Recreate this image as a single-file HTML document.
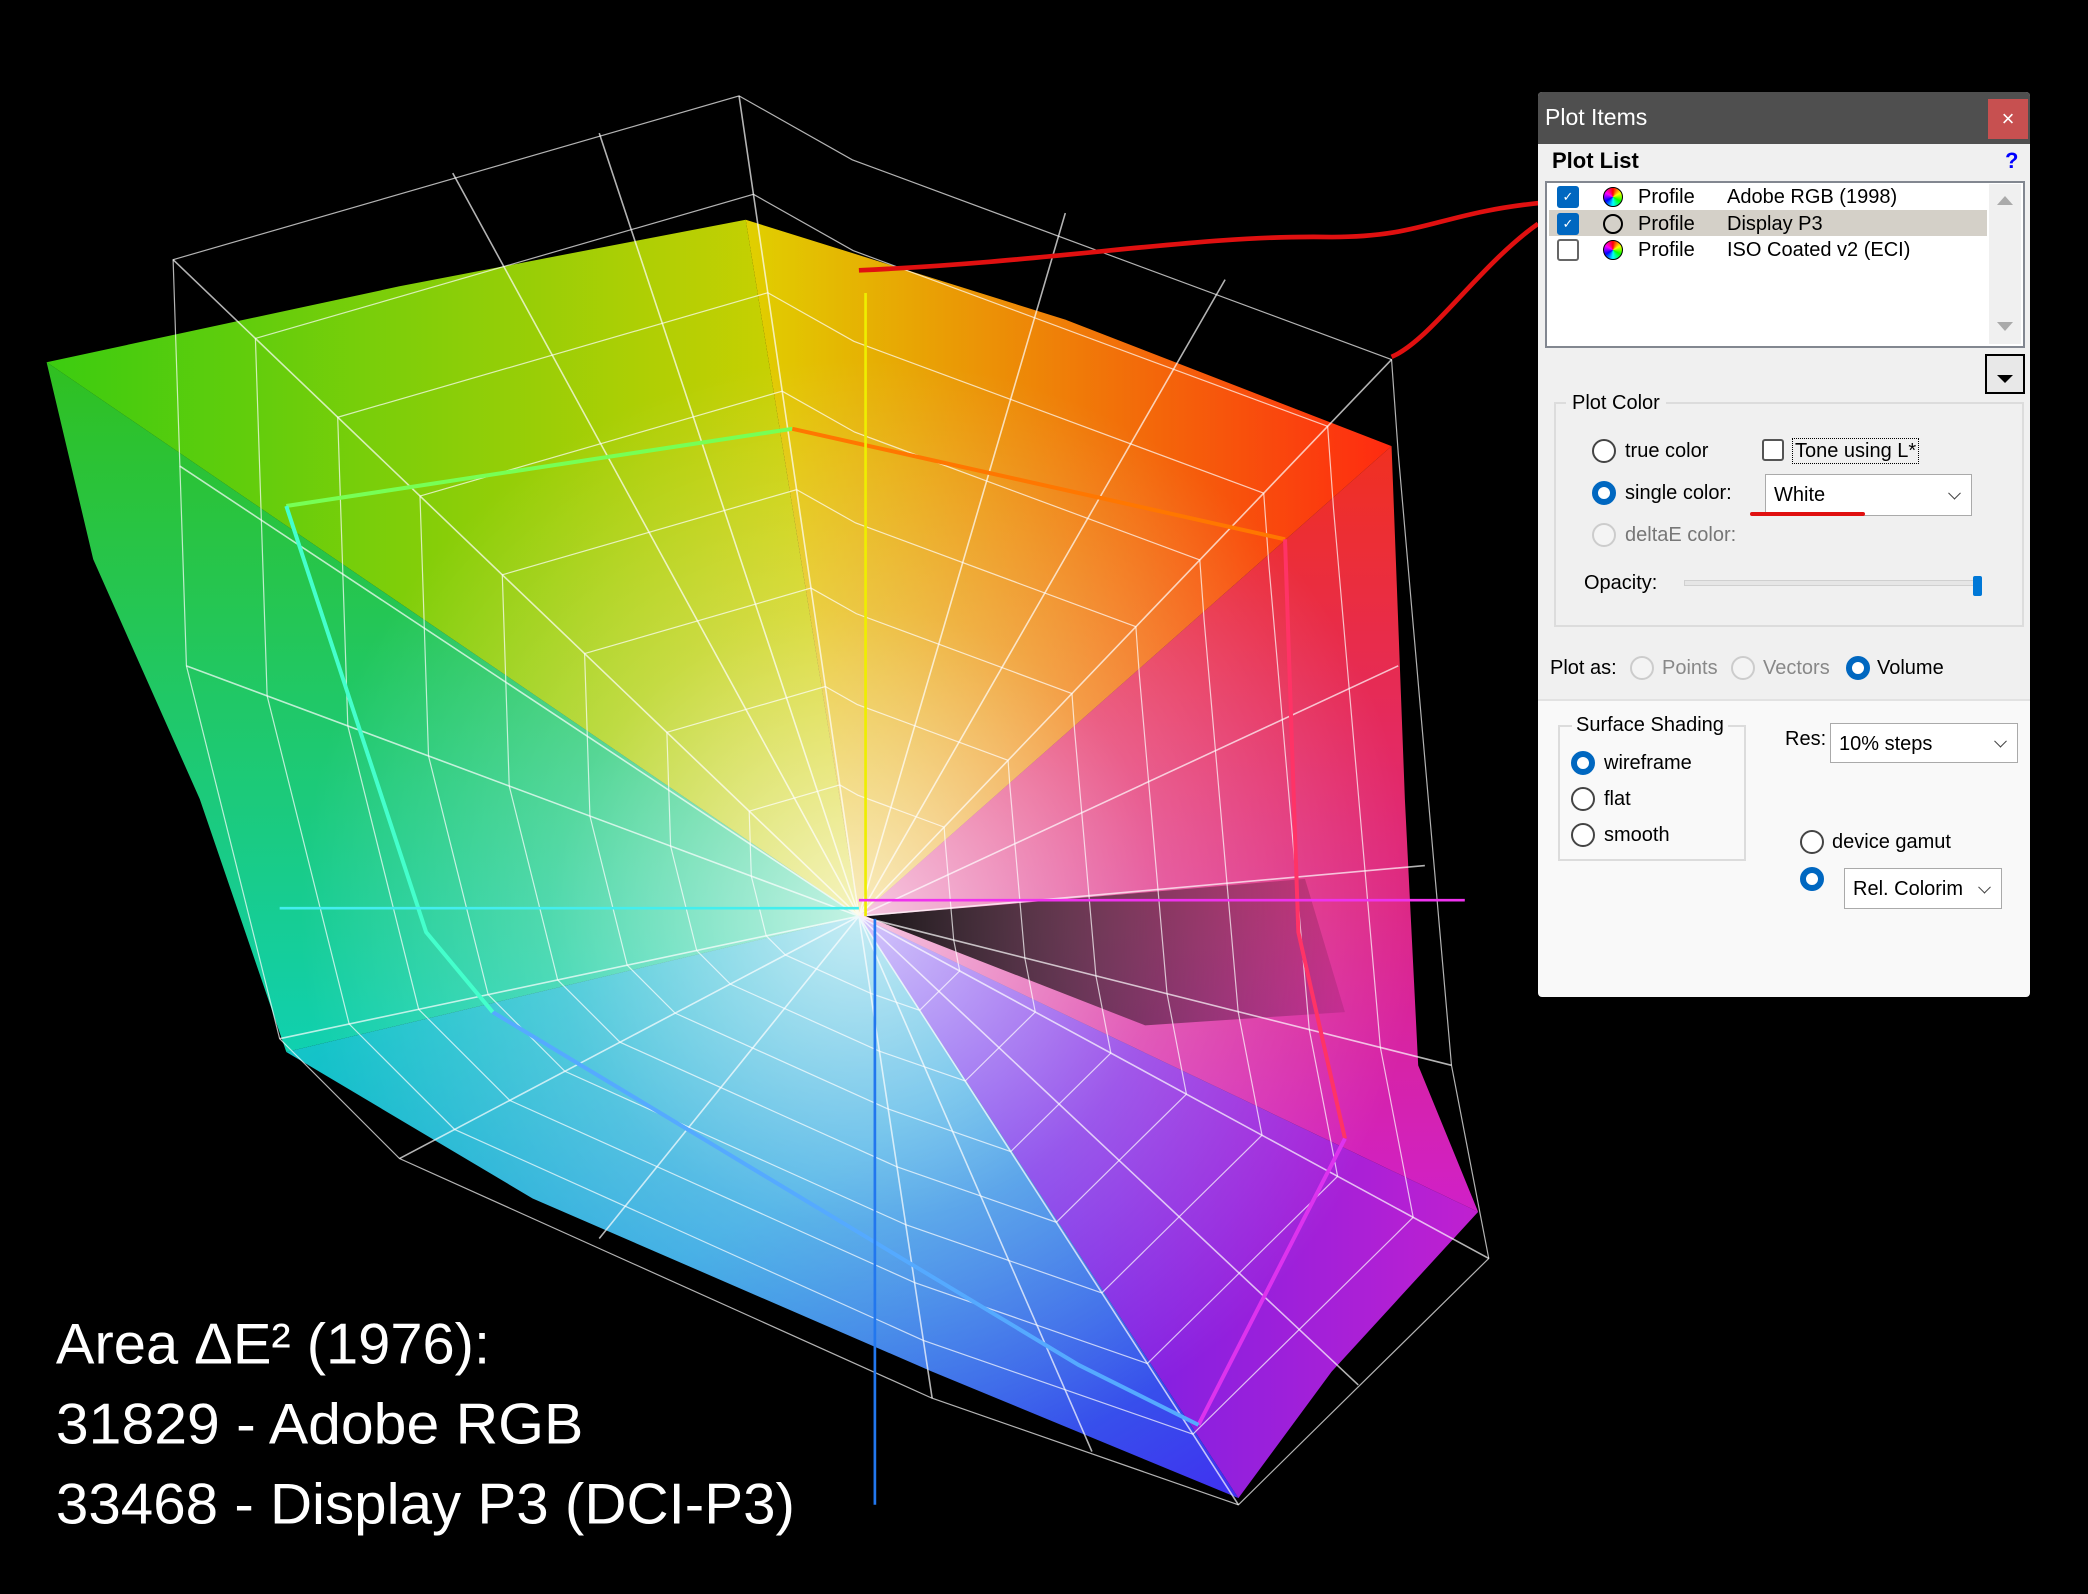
<!DOCTYPE html>
<html><head><meta charset="utf-8">
<style>
*{margin:0;padding:0;box-sizing:border-box}
body{width:2088px;height:1594px;background:#000;position:relative;overflow:hidden;font-family:"Liberation Sans",sans-serif}
.a{position:absolute;white-space:nowrap}
.t{font-size:20px;color:#000;line-height:24px}
.r{position:absolute;width:24px;height:24px;border-radius:50%;border:2px solid #444;background:#fff}
.r.on{border:6px solid #0067c0;background:#fff}
.r.dis{border-color:#ccc;background:#f4f4f4}
.cb{position:absolute;width:22px;height:22px;border:2px solid #333;border-radius:3px;background:#fff}
.cb.on{background:#0067c0;border-color:#0067c0;color:#fff;font-size:13px;text-align:center;line-height:18px}
.combo{position:absolute;background:#fff;border:1px solid #aaa;font-size:20px;padding-left:8px}
.combo:after{content:"";position:absolute;right:12px;top:50%;width:8px;height:8px;border-right:1.5px solid #444;border-bottom:1.5px solid #444;transform:translateY(-70%) rotate(45deg)}
.grp{position:absolute;border:2px solid #dcdcdc}
.wheel{position:absolute;width:20px;height:20px;border-radius:50%;background:conic-gradient(#f00,#ff0,#0f0,#0ff,#00f,#f0f,#f00);border:1px solid #000}
</style></head><body>
<svg class="a" style="left:0;top:0" width="2088" height="1594" viewBox="0 0 1568 1197" preserveAspectRatio="none">
<defs>
<linearGradient id="gA" x1="0" x2="1"><stop offset="0" stop-color="#3bcc10"/><stop offset="1" stop-color="#d8d000"/></linearGradient>
<linearGradient id="gB" x1="0" x2="1"><stop offset="0" stop-color="#e0d000"/><stop offset="1" stop-color="#ff2a10"/></linearGradient>
<linearGradient id="gC" x1="0" x2="0" y1="0" y2="1"><stop offset="0" stop-color="#f03020"/><stop offset="1" stop-color="#d020c8"/></linearGradient>
<linearGradient id="gD" x1="1" x2="0"><stop offset="0" stop-color="#c020d0"/><stop offset="1" stop-color="#5020f0"/></linearGradient>
<linearGradient id="gE" x1="1" x2="0" y1="1" y2="0"><stop offset="0" stop-color="#4030f0"/><stop offset="0.5" stop-color="#20a0e0"/><stop offset="1" stop-color="#10d0c0"/></linearGradient>
<linearGradient id="gF" x1="0" x2="0" y1="1" y2="0"><stop offset="0" stop-color="#10d0b0"/><stop offset="1" stop-color="#30c020"/></linearGradient>
<radialGradient id="rw" cx="645" cy="688" r="420" gradientUnits="userSpaceOnUse"><stop offset="0" stop-color="#fff" stop-opacity="0.75"/><stop offset="0.55" stop-color="#fff" stop-opacity="0.25"/><stop offset="1" stop-color="#fff" stop-opacity="0"/></radialGradient>
<linearGradient id="dk" x1="0" x2="1"><stop offset="0" stop-color="#000" stop-opacity="0.9"/><stop offset="1" stop-color="#000" stop-opacity="0.1"/></linearGradient>
</defs>
<polygon fill="url(#gA)" points="645,688 35,272 300,215 560,165"/>
<polygon fill="url(#gB)" points="645,688 560,165 800,240 1045,335"/>
<polygon fill="url(#gC)" points="645,688 1045,335 1055,600 1065,800 1110,910"/>
<polygon fill="url(#gD)" points="645,688 1110,910 1000,1030 930,1125"/>
<polygon fill="url(#gE)" points="645,688 930,1125 700,1030 400,900 215,790"/>
<polygon fill="url(#gF)" points="645,688 215,790 150,600 70,420 35,272"/>
<polygon fill="url(#rw)" points="35,272 300,215 560,165 800,240 1045,335 1055,600 1065,800 1110,910 1000,1030 930,1125 700,1030 400,900 215,790 150,600 70,420"/>
<polygon fill="url(#dk)" points="650,688 980,660 1010,760 860,770"/>
<g fill="none" stroke="#fff" stroke-opacity="0.7" stroke-width="1.2">
<g id="wf"><polygon vector-effect="non-scaling-stroke" points="130,195 555,72 640,120 1045,270 1050,340 1090,800 1118,945 930,1130 700,1050 300,870 210,780 140,500"/></g>
<use href="#wf" transform="translate(645,688) scale(0.88) translate(-645,-688)"/>
<use href="#wf" transform="translate(645,688) scale(0.76) translate(-645,-688)"/>
<use href="#wf" transform="translate(645,688) scale(0.64) translate(-645,-688)"/>
<use href="#wf" transform="translate(645,688) scale(0.52) translate(-645,-688)"/>
<use href="#wf" transform="translate(645,688) scale(0.40) translate(-645,-688)"/>
<use href="#wf" transform="translate(645,688) scale(0.28) translate(-645,-688)"/>
<use href="#wf" transform="translate(645,688) scale(0.16) translate(-645,-688)"/>
<path d="M645,688L130,195M645,688L555,72M645,688L340,130M645,688L450,100M645,688L800,160M645,688L920,210M645,688L1045,270M645,688L1050,500M645,688L1070,650M645,688L1090,800M645,688L1118,945M645,688L1020,1040M645,688L930,1130M645,688L820,1090M645,688L700,1050M645,688L450,930M645,688L210,780M645,688L140,500M645,688L135,350M645,688L300,870"/>
</g>
<polyline fill="none" stroke-width="3" stroke="#7f5" points="215,380 595,322"/>
<polyline fill="none" stroke-width="3" stroke="#f70" points="595,322 965,405"/>
<polyline fill="none" stroke-width="3" stroke="#f36" points="965,405 975,700 1010,855"/>
<polyline fill="none" stroke-width="3" stroke="#d3e" points="1010,855 900,1070"/>
<polyline fill="none" stroke-width="3" stroke="#5af" points="900,1070 810,1025 370,760"/>
<polyline fill="none" stroke-width="3" stroke="#4fc" points="370,760 320,700 215,380"/>
<line x1="650" y1="220" x2="650" y2="688" stroke="#ee0" stroke-width="2"/>
<line x1="645" y1="676" x2="1100" y2="676" stroke="#e3e" stroke-width="2"/>
<line x1="210" y1="682" x2="645" y2="682" stroke="#4ee" stroke-width="2"/>
<line x1="657" y1="690" x2="657" y2="1130" stroke="#27e" stroke-width="2"/>
<path d="M1160,152 C1080,160 1070,178 1000,178 C900,176 800,196 645,203" fill="none" stroke="#e01010" stroke-width="3.5"/>
<path d="M1155,168 C1110,200 1075,255 1045,268" fill="none" stroke="#e01010" stroke-width="3.5"/>
<text x="42" y="1024" fill="#fff" font-family="Liberation Sans, sans-serif" font-size="43" textLength="326" lengthAdjust="spacingAndGlyphs">Area ΔE² (1976):</text>
<text x="42" y="1084" fill="#fff" font-family="Liberation Sans, sans-serif" font-size="43" textLength="396" lengthAdjust="spacingAndGlyphs">31829 - Adobe RGB</text>
<text x="42" y="1144" fill="#fff" font-family="Liberation Sans, sans-serif" font-size="43" textLength="555" lengthAdjust="spacingAndGlyphs">33468 - Display P3 (DCI-P3)</text>
</svg>

<div class="a" style="left:1538px;top:92px;width:492px;height:905px;background:#f9f9f9;border-radius:4px;overflow:hidden">
 <div class="a" style="left:0;top:0;width:492px;height:52px;background:#4f4f4f"></div>
 <div class="a" style="left:0;top:52px;width:492px;height:556px;background:#f0f0f0"></div>
 <div class="a" style="left:0;top:607px;width:492px;height:2px;background:#e2e2e2"></div>
</div>
<div class="a" style="left:1545px;top:104px;font-size:23px;color:#fff">Plot Items</div>
<div class="a" style="left:1988px;top:99px;width:40px;height:40px;background:#c75050;color:#fff;font-size:22px;text-align:center;line-height:40px">×</div>
<div class="a" style="left:1552px;top:148px;font-size:22px;font-weight:bold">Plot List</div>
<div class="a" style="left:2005px;top:148px;font-size:22px;font-weight:bold;color:#00f">?</div>
<div class="a" style="left:1545px;top:181px;width:480px;height:167px;background:#fff;border:2px solid #828790"></div>
<div class="a" style="left:1989px;top:184px;width:32px;height:160px;background:#f0f0f0"></div>
<div class="a" style="left:1997px;top:196px;width:0;height:0;border-left:8px solid transparent;border-right:8px solid transparent;border-bottom:9px solid #aaa"></div>
<div class="a" style="left:1997px;top:322px;width:0;height:0;border-left:8px solid transparent;border-right:8px solid transparent;border-top:9px solid #aaa"></div>
<div class="a" style="left:1549px;top:210px;width:438px;height:26px;background:#d4d0c8"></div>
<div class="cb on" style="left:1557px;top:186px">✓</div>
<div class="cb on" style="left:1557px;top:213px">✓</div>
<div class="cb" style="left:1557px;top:239px;border-color:#666"></div>
<div class="wheel" style="left:1603px;top:187px"></div>
<div class="a" style="left:1603px;top:214px;width:20px;height:20px;border-radius:50%;border:2px solid #000"></div>
<div class="wheel" style="left:1603px;top:240px"></div>
<div class="a t" style="left:1638px;top:185px">Profile</div><div class="a t" style="left:1727px;top:185px">Adobe RGB (1998)</div>
<div class="a t" style="left:1638px;top:212px">Profile</div><div class="a t" style="left:1727px;top:212px">Display P3</div>
<div class="a t" style="left:1638px;top:238px">Profile</div><div class="a t" style="left:1727px;top:238px">ISO Coated v2 (ECI)</div>
<div class="a" style="left:1985px;top:354px;width:40px;height:40px;border:2px solid #000;background:#e8e8e8"></div>
<div class="a" style="left:1997px;top:375px;width:0;height:0;border-left:8px solid transparent;border-right:8px solid transparent;border-top:8px solid #000"></div>

<div class="grp" style="left:1554px;top:402px;width:470px;height:225px"></div>
<div class="a t" style="left:1566px;top:391px;background:#f0f0f0;padding:0 6px">Plot Color</div>
<div class="r" style="left:1592px;top:439px"></div><div class="a t" style="left:1625px;top:439px">true color</div>
<div class="r on" style="left:1592px;top:481px"></div><div class="a t" style="left:1625px;top:481px">single color:</div>
<div class="r dis" style="left:1592px;top:523px"></div><div class="a t" style="left:1625px;top:523px;color:#777">deltaE color:</div>
<div class="cb" style="left:1762px;top:439px;border-color:#555"></div>
<div class="a t" style="left:1792px;top:438px;border:1px dotted #000;padding:0 2px">Tone using L*</div>
<div class="combo" style="left:1765px;top:474px;width:207px;height:42px;line-height:40px">White</div>
<div class="a" style="left:1750px;top:512px;width:115px;height:4px;background:#e01010;border-radius:2px"></div>
<div class="a t" style="left:1584px;top:571px">Opacity:</div>
<div class="a" style="left:1684px;top:580px;width:298px;height:6px;background:#e6e6e6;border:1px solid #d0d0d0"></div>
<div class="a" style="left:1973px;top:576px;width:9px;height:20px;background:#0078d7;border-radius:2px"></div>

<div class="a t" style="left:1550px;top:656px">Plot as:</div>
<div class="r dis" style="left:1630px;top:656px"></div><div class="a t" style="left:1662px;top:656px;color:#888">Points</div>
<div class="r dis" style="left:1731px;top:656px"></div><div class="a t" style="left:1763px;top:656px;color:#888">Vectors</div>
<div class="r on" style="left:1846px;top:656px"></div><div class="a t" style="left:1877px;top:656px">Volume</div>

<div class="grp" style="left:1558px;top:725px;width:188px;height:136px"></div>
<div class="a t" style="left:1572px;top:713px;background:#f9f9f9;padding:0 4px">Surface Shading</div>
<div class="r on" style="left:1571px;top:751px"></div><div class="a t" style="left:1604px;top:751px">wireframe</div>
<div class="r" style="left:1571px;top:787px"></div><div class="a t" style="left:1604px;top:787px">flat</div>
<div class="r" style="left:1571px;top:823px"></div><div class="a t" style="left:1604px;top:823px">smooth</div>
<div class="a t" style="left:1785px;top:727px">Res:</div>
<div class="combo" style="left:1830px;top:723px;width:188px;height:40px;line-height:40px">10% steps</div>
<div class="r" style="left:1800px;top:830px"></div><div class="a t" style="left:1832px;top:830px">device gamut</div>
<div class="r on" style="left:1800px;top:867px"></div>
<div class="combo" style="left:1844px;top:868px;width:158px;height:41px;line-height:40px">Rel. Colorim</div>
</body></html>
